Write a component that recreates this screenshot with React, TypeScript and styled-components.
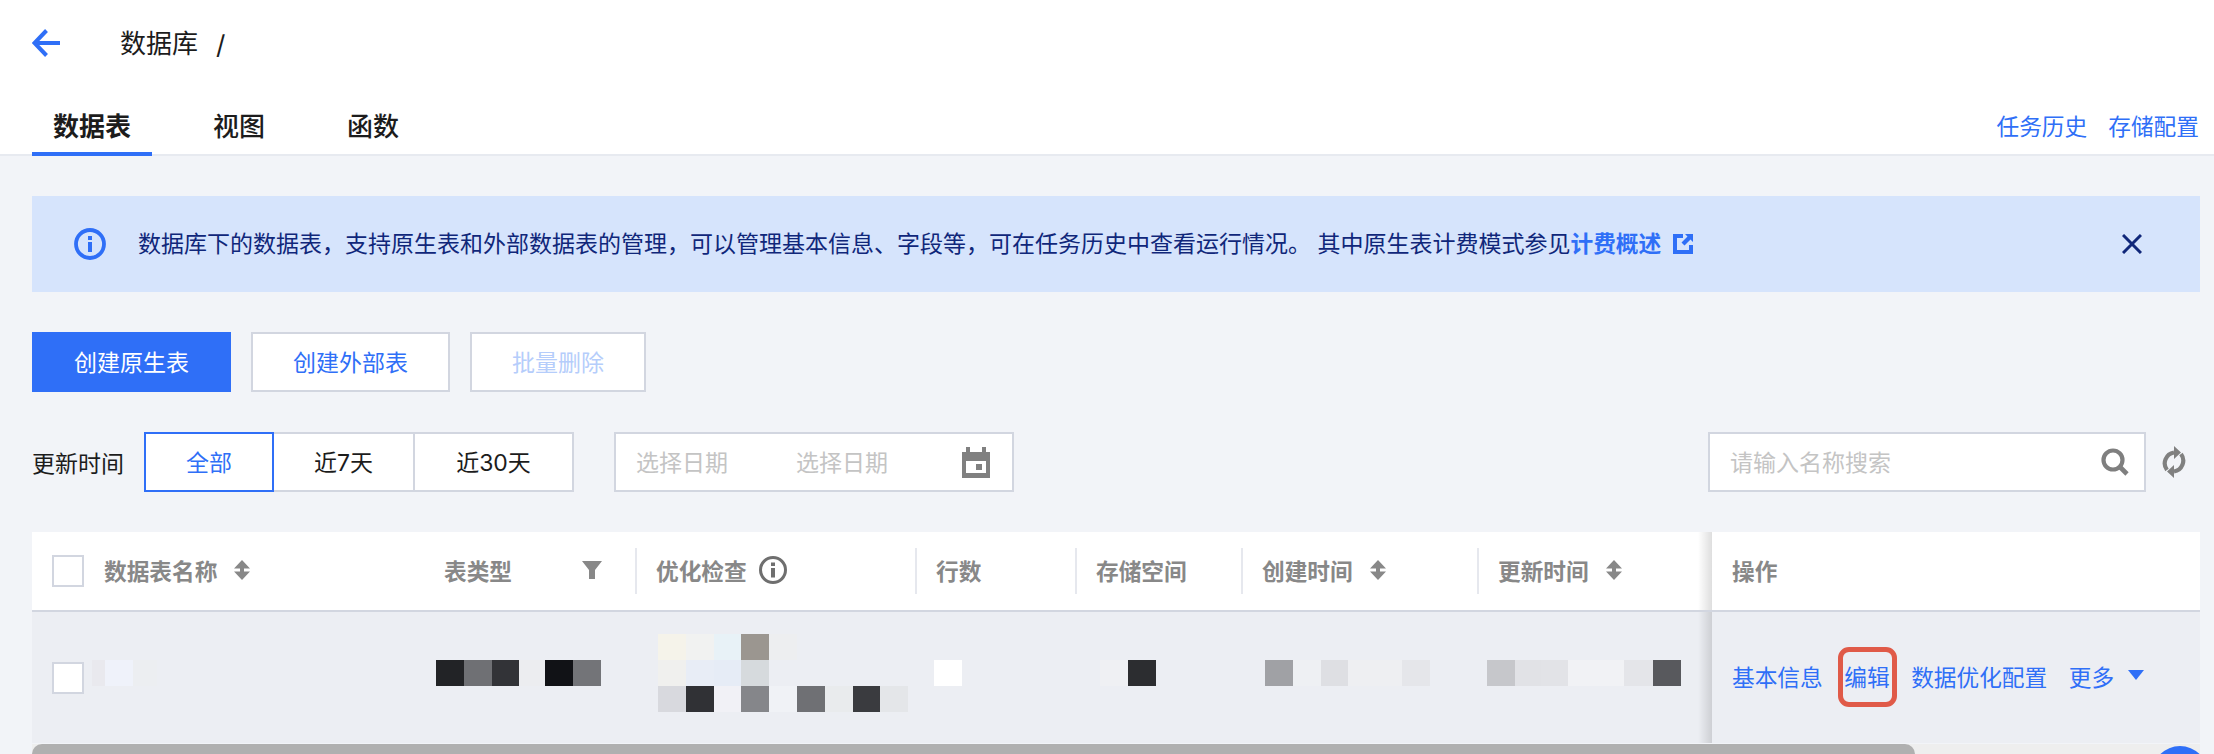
import styled, { createGlobalStyle } from 'styled-components';

const GlobalStyle = createGlobalStyle`
    html, body {
        margin: 0;
        padding: 0;
        background: #f2f4f8;
    }
    body {
        font-family: "Inter", "Noto Sans CJK SC", sans-serif;
        font-size: 23px;
        color: #1c1c1c;
    }
    * {
        box-sizing: border-box;
    }
`;

const BLUE = '#2f6ff7';
const LINE = '#d2d6e0';
const COLUMNS = '60px 332px 211px 280px 160px 166px 236px 235px 488px';

const Page = styled.div`
    position: relative;
    width: 2214px;
    height: 754px;
    overflow: hidden;
`;

const Header = styled.header`
    height: 156px;
    background: #fff;
    border-bottom: 2px solid #e7eaf0;
    padding: 0 15px 0 32px;
`;

const TitleRow = styled.div`
    height: 86px;
    display: flex;
    align-items: center;
`;

const BackIcon = styled.svg`
    width: 28px;
    height: 28px;
    margin-right: 60px;
`;

const Title = styled.h1`
    margin: 2px 0 0;
    font-size: 26px;
    font-weight: 400;
    line-height: 34px;
`;

const Slash = styled.span`
    margin: 2px 0 0 18px;
    font-size: 26px;
`;

const TabRow = styled.div`
    height: 70px;
    display: flex;
    justify-content: space-between;
`;

const Tabs = styled.div`
    display: flex;
`;

const Tab = styled.div<{ $active?: boolean }>`
    height: 70px;
    padding: 23px 21px 0;
    margin-right: 40px;
    font-size: 26px;
    line-height: 36px;
    font-weight: ${p => (p.$active ? 700 : 500)};
    border-bottom: 4px solid ${p => (p.$active ? BLUE : 'transparent')};

    &:last-child {
        margin-right: 0;
    }
`;

const HeaderLinks = styled.div`
    display: flex;
    gap: 21px;
    padding-top: 25px;
`;

const TextLink = styled.a<{ $strong?: boolean }>`
    color: ${BLUE};
    font-size: 22.7px;
    line-height: 32px;
    font-weight: ${p => (p.$strong ? 700 : 400)};
`;

const Content = styled.main`
    padding: 40px 14px 0 32px;
`;

const Alert = styled.div`
    height: 96px;
    background: #d6e4fc;
    display: flex;
    align-items: center;
    padding: 0 58px 0 42px;
    color: #10277a;
`;

const AlertIcon = styled.svg`
    width: 32px;
    height: 32px;
    margin-right: 32px;
    flex: none;
`;

const AlertText = styled.div`
    flex: 1;
    display: flex;
    align-items: center;
    white-space: nowrap;
    line-height: 32px;
`;

const ExternalIcon = styled.svg`
    width: 20px;
    height: 20px;
    margin-left: 12px;
`;

const CloseIcon = styled.svg`
    width: 20px;
    height: 20px;
`;

const Toolbar = styled.div`
    margin-top: 40px;
    display: flex;
    gap: 20px;
`;

const Button = styled.button<{ $kind?: 'primary' | 'disabled' }>`
    height: 60px;
    padding: 0 40px 2px;
    font: inherit;
    border: 2px solid ${p => (p.$kind === 'primary' ? BLUE : LINE)};
    background: ${p => (p.$kind === 'primary' ? BLUE : '#fff')};
    color: ${p => (p.$kind === 'primary' ? '#fff' : p.$kind === 'disabled' ? '#b5cdfb' : BLUE)};
`;

const FilterBar = styled.div`
    margin-top: 40px;
    display: flex;
    align-items: center;
`;

const FilterLabel = styled.span`
    width: 112px;
    flex: none;
`;

const Segments = styled.div`
    display: flex;
`;

const Segment = styled.div<{ $active?: boolean; $width: number }>`
    width: ${p => p.$width}px;
    height: 60px;
    margin-left: -2px;
    padding-bottom: 2px;
    background: #fff;
    border: 2px solid ${p => (p.$active ? BLUE : LINE)};
    color: ${p => (p.$active ? BLUE : 'inherit')};
    position: relative;
    z-index: ${p => (p.$active ? 1 : 0)};
    display: flex;
    align-items: center;
    justify-content: center;

    &:first-child {
        margin-left: 0;
    }
`;

const DatePicker = styled.div`
    width: 400px;
    height: 60px;
    margin-left: 40px;
    padding: 0 22px 2px 20px;
    background: #fff;
    border: 2px solid ${LINE};
    display: flex;
    align-items: center;
    color: #c4c4c4;
`;

const DateText = styled.span`
    width: 160px;
    flex: none;
`;

const CalendarIcon = styled.svg`
    width: 28px;
    height: 31px;
    margin-left: auto;
    margin-top: 2px;
`;

const SearchBox = styled.div`
    width: 438px;
    height: 60px;
    margin-left: auto;
    padding: 0 15px 2px 20px;
    background: #fff;
    border: 2px solid ${LINE};
    display: flex;
    align-items: center;
    justify-content: space-between;
    color: #c4c4c4;
`;

const SearchIcon = styled.svg`
    width: 28px;
    height: 28px;
    margin-top: 2px;
`;

const RefreshIcon = styled.svg`
    width: 24px;
    height: 32px;
    margin-left: 16px;
    margin-right: 14px;
`;

const Table = styled.section`
    margin-top: 40px;
    width: 2168px;
`;

const HeadRow = styled.div`
    display: grid;
    grid-template-columns: ${COLUMNS};
    height: 80px;
    background: #fff;
    border-bottom: 2px solid ${LINE};
`;

const BodyRow = styled.div`
    display: grid;
    grid-template-columns: ${COLUMNS};
    height: 131px;
    background: #eceef3;
`;

const Cell = styled.div<{ $pad?: number; $lift?: boolean }>`
    display: flex;
    align-items: center;
    padding-left: ${p => p.$pad ?? 0}px;
    padding-bottom: ${p => (p.$lift ? 10 : 0)}px;
`;

const HeadLabel = styled.div<{ $divider?: boolean; $pad?: number }>`
    width: 100%;
    height: 46px;
    display: flex;
    align-items: center;
    padding-left: ${p => p.$pad ?? 19}px;
    padding-bottom: 2px;
    border-left: ${p => (p.$divider ? '2px solid #e6e8ee' : 'none')};
    color: #888;
    font-size: 22.7px;
    font-weight: 700;
`;

const Fixed = styled(Cell)`
    position: relative;
    padding-left: 20px;

    &::before {
        content: '';
        position: absolute;
        left: -14px;
        top: 0;
        bottom: 0;
        width: 14px;
        background: linear-gradient(to right, rgba(0, 0, 0, 0), rgba(0, 0, 0, 0.13));
    }
`;

const Check = styled.span`
    display: block;
    width: 32px;
    height: 32px;
    background: #fff;
    border: 2px solid ${LINE};
`;

const SmallIcon = styled.svg<{ $gap?: number; $w?: number; $h?: number }>`
    width: ${p => p.$w ?? 16}px;
    height: ${p => p.$h ?? 20}px;
    margin-left: ${p => p.$gap ?? 17}px;
    flex: none;
`;

const Mosaic = styled.div`
    display: flex;
    flex-direction: column;
`;

const MosaicRow = styled.div`
    display: flex;
    height: 26px;
`;

const Tile = styled.span<{ $c: string; $w?: number }>`
    display: block;
    width: ${p => p.$w ?? 27.8}px;
    height: 100%;
    background: ${p => p.$c};
`;

const Actions = styled.div`
    display: flex;
    align-items: center;
    gap: 21.5px;
`;

const EditLink = styled(TextLink)`
    position: relative;

    /* red annotation frame drawn over the screenshot */
    &::after {
        content: '';
        position: absolute;
        inset: -15px -7px -13px -6px;
        border: 5px solid #e05a48;
        border-radius: 11px;
    }
`;

const Caret = styled.svg`
    width: 16px;
    height: 10px;
    margin-left: -8px;
    margin-top: -6px;
`;

const ScrollTrack = styled.div`
    margin-top: 1px;
    height: 20px;
    background: #eeeeee;
`;

const ScrollThumb = styled.div`
    width: 1883px;
    height: 100%;
    background: #b0b0b0;
    border-radius: 10px;
`;

const HelpBubble = styled.div`
    position: absolute;
    left: 2152px;
    top: 746px;
    width: 56px;
    height: 56px;
    border-radius: 50%;
    background: ${BLUE};
`;

type Tiles = [string, number?][];

const tileRows = (rows: Tiles[]) => (
    <Mosaic>
        {rows.map((row, i) => (
            <MosaicRow key={i}>
                {row.map(([c, w], j) => (
                    <Tile key={j} $c={c} $w={w} />
                ))}
            </MosaicRow>
        ))}
    </Mosaic>
);

const SortIcon = () => (
    <SmallIcon viewBox="0 0 16 20">
        <path d="M8 0 16 8.500H0zM8 20 0 11.500h16z" fill="#888" />
        <rect x="6" y="6" width="4" height="8" fill="#888" />
    </SmallIcon>
);

export default function App() {
    return (
        <Page>
            <GlobalStyle />
            <Header>
                <TitleRow>
                    <BackIcon viewBox="0 0 28 28">
                        <path d="M14.500 1.500 2.500 14l12 12.500M3 14h25" fill="none" stroke={BLUE} strokeWidth="4" />
                    </BackIcon>
                    <Title>数据库</Title>
                    <Slash>/</Slash>
                </TitleRow>
                <TabRow>
                    <Tabs>
                        <Tab $active>数据表</Tab>
                        <Tab>视图</Tab>
                        <Tab>函数</Tab>
                    </Tabs>
                    <HeaderLinks>
                        <TextLink>任务历史</TextLink>
                        <TextLink>存储配置</TextLink>
                    </HeaderLinks>
                </TabRow>
            </Header>
            <Content>
                <Alert>
                    <AlertIcon viewBox="0 0 32 32">
                        <circle cx="16" cy="16" r="14" fill="none" stroke={BLUE} strokeWidth="3.8" />
                        <rect x="14" y="8" width="4" height="4" fill={BLUE} />
                        <rect x="14" y="14" width="4" height="10" fill={BLUE} />
                    </AlertIcon>
                    <AlertText>
                        数据库下的数据表，支持原生表和外部数据表的管理，可以管理基本信息、字段等，可在任务历史中查看运行情况。 其中原生表计费模式参见
                        <TextLink $strong>计费概述</TextLink>
                        <ExternalIcon viewBox="0 0 20 20">
                            <path d="M0 0h10v4H4v12h12v-5h4v9H0z" fill={BLUE} />
                            <path d="M12 0h8v8l-2.500-2.500-6 6-3-3 6-6z" fill={BLUE} />
                        </ExternalIcon>
                    </AlertText>
                    <CloseIcon viewBox="0 0 20 20">
                        <path d="M1 1l18 18M19 1 1 19" stroke="#10277a" strokeWidth="3" fill="none" />
                    </CloseIcon>
                </Alert>
                <Toolbar>
                    <Button $kind="primary">创建原生表</Button>
                    <Button>创建外部表</Button>
                    <Button $kind="disabled">批量删除</Button>
                </Toolbar>
                <FilterBar>
                    <FilterLabel>更新时间</FilterLabel>
                    <Segments>
                        <Segment $active $width={130}>全部</Segment>
                        <Segment $width={143}>近7天</Segment>
                        <Segment $width={161}>近30天</Segment>
                    </Segments>
                    <DatePicker>
                        <DateText>选择日期</DateText>
                        <DateText>选择日期</DateText>
                        <CalendarIcon viewBox="0 0 28 31">
                            <path d="M4 0h4v5h12V0h4v5h4v26H0V5h4zM4 14v12h20V14z" fill="#808080" />
                            <rect x="14" y="17" width="6" height="6" fill="#808080" />
                        </CalendarIcon>
                    </DatePicker>
                    <SearchBox>
                        请输入名称搜索
                        <SearchIcon viewBox="0 0 28 28">
                            <circle cx="12" cy="12" r="9.500" fill="none" stroke="#7f7f7f" strokeWidth="4.2" />
                            <path d="M18.500 18.500 26 26" stroke="#7f7f7f" strokeWidth="4.6" />
                        </SearchIcon>
                    </SearchBox>
                    <RefreshIcon viewBox="0 0 24 32">
                        <path d="M5 24A11 11 0 0 1 12 6.500" fill="none" stroke="#808080" strokeWidth="4.2" />
                        <path d="M19 8A11 11 0 0 1 12 25.500" fill="none" stroke="#808080" strokeWidth="4.2" />
                        <path d="M12 0l7 6.500-7 6.500zM12 19l-7 6.500 7 6.500z" fill="#808080" />
                    </RefreshIcon>
                </FilterBar>
                <Table>
                    <HeadRow>
                        <Cell $pad={20}><Check /></Cell>
                        <Cell>
                            <HeadLabel $pad={12}>数据表名称<SortIcon /></HeadLabel>
                        </Cell>
                        <Cell>
                            <HeadLabel $pad={20}>
                                表类型
                                <SmallIcon $gap={70} $w={20} viewBox="0 0 20 20">
                                    <path d="M0 1h20l-7 9v9H7v-9z" fill="#888" />
                                </SmallIcon>
                            </HeadLabel>
                        </Cell>
                        <Cell>
                            <HeadLabel $divider>
                                优化检查
                                <SmallIcon $gap={12} $w={28} $h={28} viewBox="0 0 28 28">
                                    <circle cx="14" cy="14" r="12.500" fill="none" stroke="#6f6f6f" strokeWidth="3" />
                                    <rect x="12" y="6.500" width="4" height="3.500" fill="#6f6f6f" />
                                    <rect x="12" y="12" width="4" height="9.500" fill="#6f6f6f" />
                                </SmallIcon>
                            </HeadLabel>
                        </Cell>
                        <Cell><HeadLabel $divider>行数</HeadLabel></Cell>
                        <Cell><HeadLabel $divider>存储空间</HeadLabel></Cell>
                        <Cell><HeadLabel $divider>创建时间<SortIcon /></HeadLabel></Cell>
                        <Cell><HeadLabel $divider>更新时间<SortIcon /></HeadLabel></Cell>
                        <Fixed><HeadLabel $pad={0}>操作</HeadLabel></Fixed>
                    </HeadRow>
                    <BodyRow>
                        <Cell $pad={20}><Check /></Cell>
                        <Cell $lift>
                            {tileRows([[['#e9e9ee', 13], ['#eff2fa'], ['#eceef1', 24]]])}
                        </Cell>
                        <Cell $lift $pad={12}>
                            {tileRows([[['#222326'], ['#6f7074'], ['#323337'], ['#ecedf0', 26], ['#111216'], ['#737478']]])}
                        </Cell>
                        <Cell $lift $pad={23}>
                            {tileRows([
                                [['#f5f3ea'], ['#f1f2f1'], ['#e8f2f7'], ['#9b9690'], ['#edeef0']],
                                [['#f0f0ee'], ['#e8edf6'], ['#e6ecf6'], ['#d6dadd']],
                                [['#d8d9de'], ['#303135'], ['#f1f1f6'], ['#85868a'], ['#f0f2f6'], ['#6f7074'], ['#e9ebed'], ['#3a3b3f'], ['#e4e6e9']],
                            ])}
                        </Cell>
                        <Cell $lift $pad={19}>{tileRows([[['#ffffff']]])}</Cell>
                        <Cell $lift $pad={25}>{tileRows([[['#eff0f3'], ['#2c2d30']]])}</Cell>
                        <Cell $lift $pad={24}>
                            {tileRows([[['#a0a1a5'], ['#eef0f3'], ['#dedfe3'], ['#eeeff2', 54], ['#e5e6ea']]])}
                        </Cell>
                        <Cell $lift $pad={10}>
                            {tileRows([[['#c6c7cb'], ['#e1e2e6', 26], ['#e2e3e7', 27], ['#f1f2f5', 56], ['#e4e5e9', 29], ['#58595d']]])}
                        </Cell>
                        <Fixed>
                            <Actions>
                                <TextLink>基本信息</TextLink>
                                <EditLink>编辑</EditLink>
                                <TextLink>数据优化配置</TextLink>
                                <TextLink>更多</TextLink>
                                <Caret viewBox="0 0 16 10">
                                    <path d="M0 0h16L8 10z" fill={BLUE} />
                                </Caret>
                            </Actions>
                        </Fixed>
                    </BodyRow>
                    <ScrollTrack>
                        <ScrollThumb />
                    </ScrollTrack>
                </Table>
            </Content>
            <HelpBubble />
        </Page>
    );
}
